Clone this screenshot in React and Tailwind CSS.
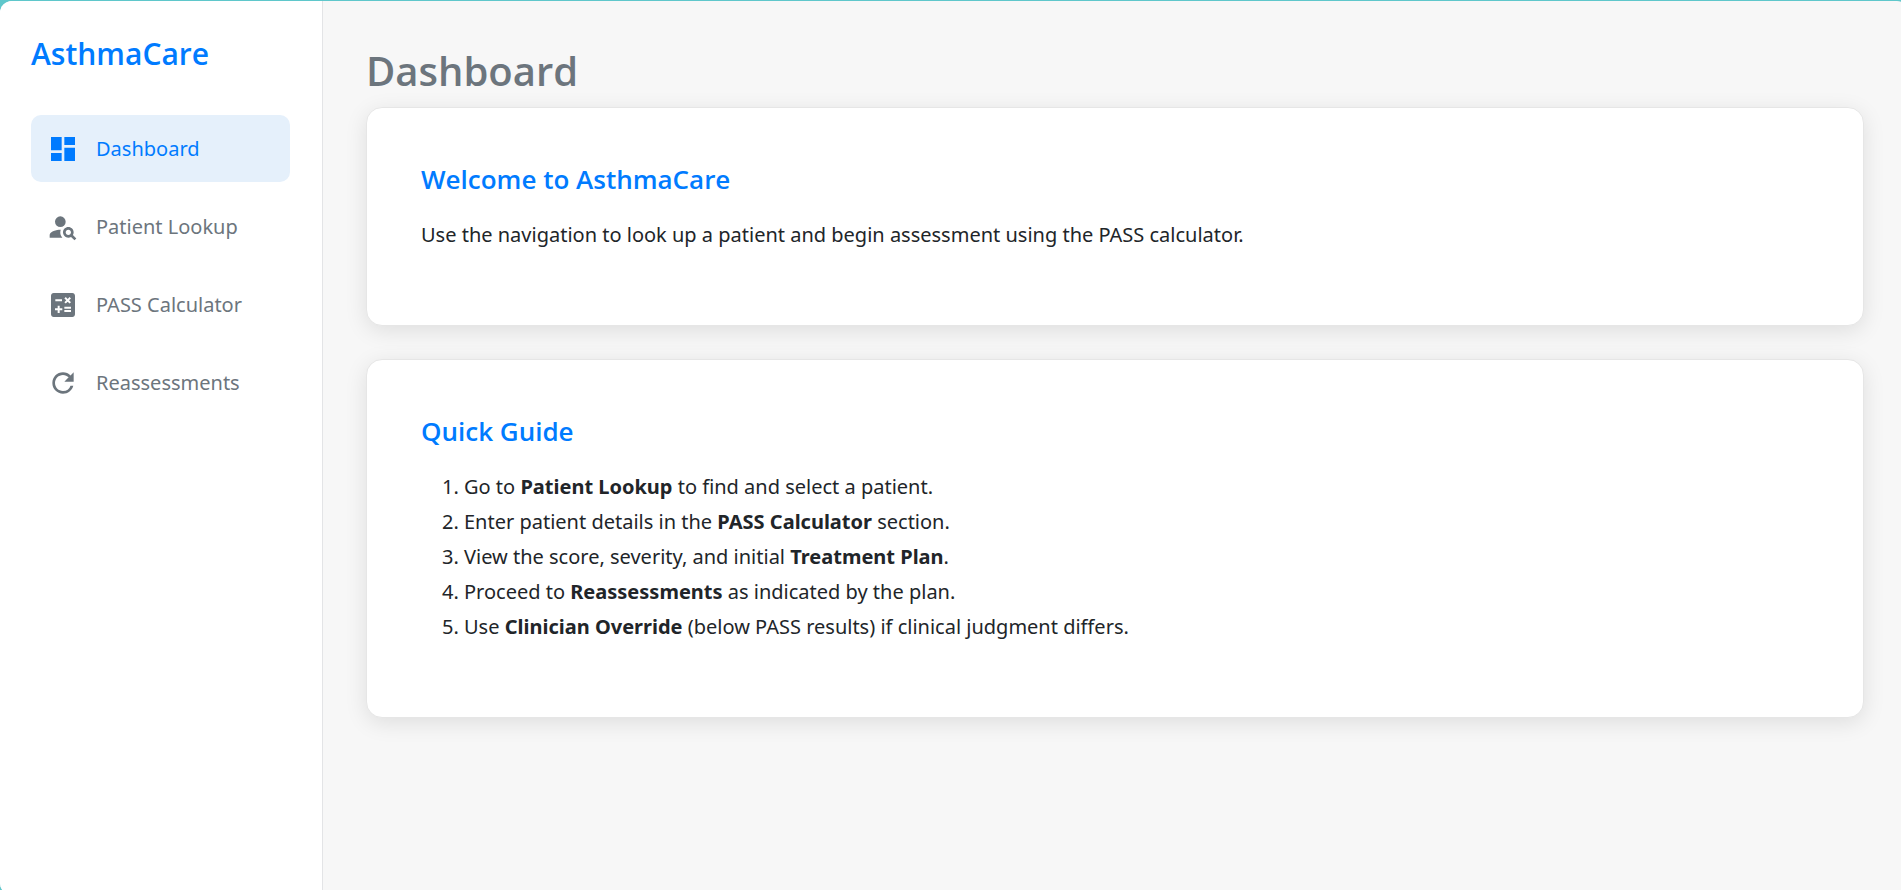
import { MdDashboard, MdPersonSearch, MdCalculate, MdRefresh } from "react-icons/md";

const navItems = [
  { label: "Dashboard", Icon: MdDashboard, active: true },
  { label: "Patient Lookup", Icon: MdPersonSearch },
  { label: "PASS Calculator", Icon: MdCalculate },
  { label: "Reassessments", Icon: MdRefresh },
];

function NavItem({ label, Icon, active }) {
  return (
    <a
      href="#"
      aria-current={active ? "page" : undefined}
      className={
        active
          ? "flex h-[67px] items-center gap-[17px] rounded-[10px] bg-[#e5f0fb] px-4 text-[#007bff]"
          : "flex h-[67px] items-center gap-[17px] rounded-[10px] px-4 text-[#6c757d]"
      }
    >
      <Icon className="size-8 shrink-0" aria-hidden="true" />
      <span>{label}</span>
    </a>
  );
}

function Card({ title, children }) {
  return (
    <section className="rounded-2xl border border-[#e6e6e6] bg-white px-[54px] pt-[55px] pb-[73px] shadow-[0_5px_22px_rgba(0,0,0,0.1)]">
      <h2 className="mb-[22px] font-['Open_Sans','Noto_Sans',sans-serif] text-[26px] leading-8 font-semibold text-[#007bff]">
        {title}
      </h2>
      {children}
    </section>
  );
}

export default function App() {
  return (
    <div className="h-screen overflow-hidden bg-[#5fc7cb] pt-px font-['Noto_Sans','Open_Sans',sans-serif] text-xl text-[#212529]">
      <div className="-mr-2 flex h-[calc(100%+5px)] overflow-hidden rounded-xl bg-[#f7f7f7]">
        <aside className="w-[323px] shrink-0 border-r border-[#e3e4e6] bg-white pt-[33px] pr-8 pl-[31px]">
          <div className="mb-[41px] font-['Open_Sans','Noto_Sans',sans-serif] text-[30px] leading-10 font-semibold text-[#007bff]">
            AsthmaCare
          </div>
          <nav className="flex flex-col gap-[11px]">
            {navItems.map((item) => (
              <NavItem key={item.label} {...item} />
            ))}
          </nav>
        </aside>
        <main className="min-w-0 flex-1 pt-[43px] pr-[45px] pl-[43px]">
          <h1 className="mb-[9px] font-['Open_Sans','Noto_Sans',sans-serif] text-[40px] leading-[54px] font-semibold text-[#6c757d]">
            Dashboard
          </h1>
          <div className="flex flex-col gap-[33px]">
            <Card title="Welcome to AsthmaCare">
              <p className="leading-[35px]">
                Use the navigation to look up a patient and begin assessment using the PASS calculator.
              </p>
            </Card>
            <Card title="Quick Guide">
              <ol className="list-decimal pl-[43px] leading-[35px]">
                <li>Go to <strong>Patient Lookup</strong> to find and select a patient.</li>
                <li>Enter patient details in the <strong>PASS Calculator</strong> section.</li>
                <li>View the score, severity, and initial <strong>Treatment Plan</strong>.</li>
                <li>Proceed to <strong>Reassessments</strong> as indicated by the plan.</li>
                <li>Use <strong>Clinician Override</strong> (below PASS results) if clinical judgment differs.</li>
              </ol>
            </Card>
          </div>
        </main>
      </div>
    </div>
  );
}
